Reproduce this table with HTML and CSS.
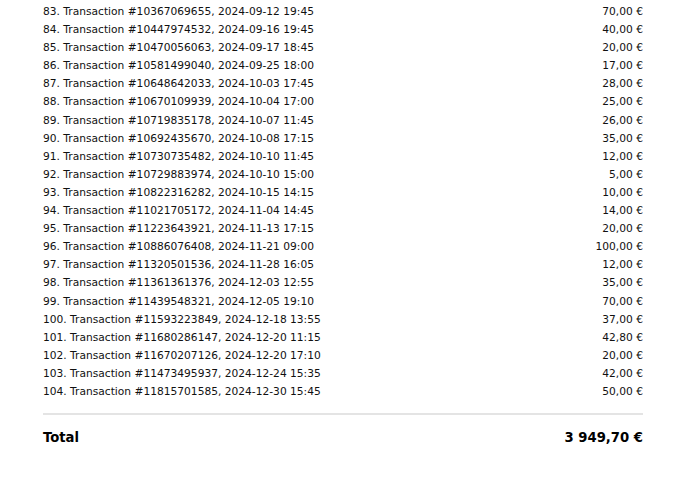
FILE: index.html
```html
<!DOCTYPE html>
<html>
<head>
<meta charset="utf-8">
<link rel="stylesheet" href="styles.css">
</head>
<body>
<div class="page">
  <ul class="list">
    <li class="row"><span>83. Transaction #10367069655, 2024-09-12 19:45</span><span>70,00 €</span></li>
    <li class="row"><span>84. Transaction #10447974532, 2024-09-16 19:45</span><span>40,00 €</span></li>
    <li class="row"><span>85. Transaction #10470056063, 2024-09-17 18:45</span><span>20,00 €</span></li>
    <li class="row"><span>86. Transaction #10581499040, 2024-09-25 18:00</span><span>17,00 €</span></li>
    <li class="row"><span>87. Transaction #10648642033, 2024-10-03 17:45</span><span>28,00 €</span></li>
    <li class="row"><span>88. Transaction #10670109939, 2024-10-04 17:00</span><span>25,00 €</span></li>
    <li class="row"><span>89. Transaction #10719835178, 2024-10-07 11:45</span><span>26,00 €</span></li>
    <li class="row"><span>90. Transaction #10692435670, 2024-10-08 17:15</span><span>35,00 €</span></li>
    <li class="row"><span>91. Transaction #10730735482, 2024-10-10 11:45</span><span>12,00 €</span></li>
    <li class="row"><span>92. Transaction #10729883974, 2024-10-10 15:00</span><span>5,00 €</span></li>
    <li class="row"><span>93. Transaction #10822316282, 2024-10-15 14:15</span><span>10,00 €</span></li>
    <li class="row"><span>94. Transaction #11021705172, 2024-11-04 14:45</span><span>14,00 €</span></li>
    <li class="row"><span>95. Transaction #11223643921, 2024-11-13 17:15</span><span>20,00 €</span></li>
    <li class="row"><span>96. Transaction #10886076408, 2024-11-21 09:00</span><span>100,00 €</span></li>
    <li class="row"><span>97. Transaction #11320501536, 2024-11-28 16:05</span><span>12,00 €</span></li>
    <li class="row"><span>98. Transaction #11361361376, 2024-12-03 12:55</span><span>35,00 €</span></li>
    <li class="row"><span>99. Transaction #11439548321, 2024-12-05 19:10</span><span>70,00 €</span></li>
    <li class="row"><span>100. Transaction #11593223849, 2024-12-18 13:55</span><span>37,00 €</span></li>
    <li class="row"><span>101. Transaction #11680286147, 2024-12-20 11:15</span><span>42,80 €</span></li>
    <li class="row"><span>102. Transaction #11670207126, 2024-12-20 17:10</span><span>20,00 €</span></li>
    <li class="row"><span>103. Transaction #11473495937, 2024-12-24 15:35</span><span>42,00 €</span></li>
    <li class="row"><span>104. Transaction #11815701585, 2024-12-30 15:45</span><span>50,00 €</span></li>
  </ul>
  <div class="total"><span>Total</span><span>3 949,70 €</span></div>
</div>
</body>
</html>
```

FILE: styles.css
```css
html, body {
  margin: 0;
  padding: 0;
  background: #fff;
}
body {
  font-family: "DejaVu Sans", sans-serif;
  color: #111;
}
.page {
  width: 600px;
  margin-left: 43px;
  padding-top: 3px;
}
.list {
  list-style: none;
  margin: 0;
  padding: 0 0 12px 0;
  border-bottom: 2px solid #e4e4e4;
}
.row {
  display: flex;
  justify-content: space-between;
  font-size: 10.667px;
  line-height: 18.1px;
}
.total {
  display: flex;
  justify-content: space-between;
  font-size: 13.2px;
  font-weight: bold;
  padding-top: 15px;
  color: #000;
}
```
